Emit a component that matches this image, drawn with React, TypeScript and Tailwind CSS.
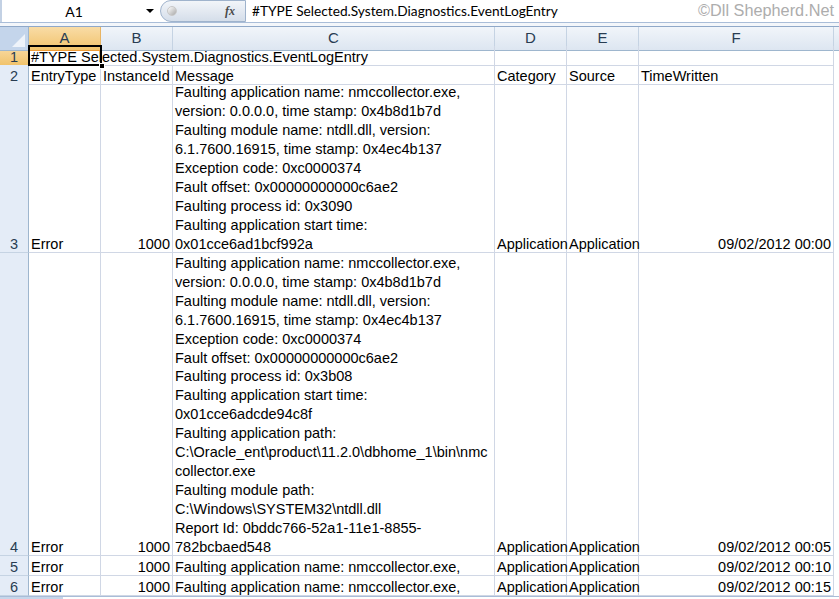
import type { ReactNode } from "react";

/* =========================
LAYOUT
========================= */

const GRID = "grid grid-cols-[29px_72px_72px_322px_72px_72px_195px_5px]";
const CELL_FONT = "font-['Liberation_Sans',Arial,sans-serif] text-[14.5px] leading-[18.9px] text-black";

const row3Msg = [
  "Faulting application name: nmccollector.exe,",
  "version: 0.0.0.0, time stamp: 0x4b8d1b7d",
  "Faulting module name: ntdll.dll, version:",
  "6.1.7600.16915, time stamp: 0x4ec4b137",
  "Exception code: 0xc0000374",
  "Fault offset: 0x00000000000c6ae2",
  "Faulting process id: 0x3090",
  "Faulting application start time:",
  "0x01cce6ad1bcf992a",
];

const row4Msg = [
  "Faulting application name: nmccollector.exe,",
  "version: 0.0.0.0, time stamp: 0x4b8d1b7d",
  "Faulting module name: ntdll.dll, version:",
  "6.1.7600.16915, time stamp: 0x4ec4b137",
  "Exception code: 0xc0000374",
  "Fault offset: 0x00000000000c6ae2",
  "Faulting process id: 0x3b08",
  "Faulting application start time:",
  "0x01cce6adcde94c8f",
  "Faulting application path:",
  "C:\\Oracle_ent\\product\\11.2.0\\dbhome_1\\bin\\nmc",
  "collector.exe",
  "Faulting module path:",
  "C:\\Windows\\SYSTEM32\\ntdll.dll",
  "Report Id: 0bddc766-52a1-11e1-8855-",
  "782bcbaed548",
];

/* =========================
CELLS
========================= */

function Cell({
  children,
  right,
  noRight,
  spill,
}: {
  children?: ReactNode;
  right?: boolean;
  noRight?: boolean;
  spill?: boolean;
}) {
  return (
    <div
      className={`flex flex-col justify-end border-b border-[#d0d7e5] whitespace-nowrap ${
        noRight ? "" : "border-r"
      } ${right ? "items-end pr-[2px]" : "items-start pl-[2px]"} ${
        spill ? "overflow-visible" : "overflow-hidden"
      }`}
    >
      <div className={`relative top-[1.5px] flex flex-col ${right ? "items-end" : "items-start"}`}>
        {children}
      </div>
    </div>
  );
}

function RowHead({ n, active }: { n: number; active?: boolean }) {
  return (
    <div
      className={`flex items-end justify-center border-r border-b font-['Liberation_Sans',Arial,sans-serif] text-[14.5px] leading-[18.9px] text-[#283c52] ${
        active
          ? "bg-gradient-to-b from-[#f9dca6] to-[#f1c36b] border-r-[#f29d36] border-b-[#e8b463]"
          : "bg-[#e4ecf7] border-r-[#9eb6ce] border-b-[#c5d3e3]"
      }`}
    >
      <span className="relative top-[1.5px]">{n}</span>
    </div>
  );
}

function ColHead({ label, active }: { label?: string; active?: boolean }) {
  return (
    <div
      className={`flex items-center justify-center border-r border-b text-[15px] font-['Liberation_Sans',Arial,sans-serif] text-[#283c52] ${
        active
          ? "bg-gradient-to-b from-[#f9dca6] to-[#f1c36b] border-r-[#e8b463] border-b-[#f29d36]"
          : "bg-gradient-to-b from-[#f1f5fa] to-[#dde6f1] border-r-[#c5d3e3] border-b-[#9eb6ce]"
      }`}
    >
      {label}
    </div>
  );
}

/* =========================
APP
========================= */

export default function App() {
  return (
    <div className="w-[839px] h-[599px] overflow-hidden bg-white flex flex-col">
      {/* FORMULA BAR */}
      <div className="relative h-[23px] flex border-b border-[#a9bdd8] bg-white shrink-0">
        <div className="w-[160px] flex items-center border-l-2 border-[#c3d1e4]">
          <span className="flex-1 text-center font-['Lato',sans-serif] text-[14px] text-black">A1</span>
          <span className="w-0 h-0 border-l-[4px] border-r-[4px] border-t-[4px] border-l-transparent border-r-transparent border-t-black mr-[6px]" />
        </div>
        <div className="w-[86px] h-[22px] flex items-center rounded-l-full border border-[#9fb3cc] bg-gradient-to-b from-[#f2f5f9] to-[#d5deea]">
          <span className="ml-[6px] w-[10px] h-[10px] rounded-full bg-gradient-to-br from-[#ffffff] to-[#a9a9a9] border border-[#c8c8c8]" />
          <span className="flex-1" />
          <span className="mr-[10px] font-['Liberation_Serif',serif] italic font-bold text-[12px] text-[#4a4a4a]">
            fx
          </span>
        </div>
        <div className="flex-1 flex items-center pl-[6px] font-['Lato',sans-serif] text-[13.7px] text-black">
          #TYPE Selected.System.Diagnostics.EventLogEntry
        </div>
        <div className="absolute right-[5px] top-0 h-[21px] flex items-center font-['Liberation_Sans',Arial,sans-serif] text-[16.3px] text-[#adadad]">
          ©Dll Shepherd.Net
        </div>
      </div>
      <div className="h-[4px] bg-[#f3f6fa] border-b border-[#8fa8c8] shrink-0" />

      {/* COLUMN HEADERS */}
      <div className={`${GRID} h-[19px] shrink-0`}>
        <div className="relative bg-[#c4d5eb] border-r border-b border-[#9eb6ce]">
          <svg className="absolute right-[3px] bottom-[3px]" width="13" height="13" viewBox="0 0 13 13">
            <polygon points="13,0 13,13 0,13" fill="#eef3fa" />
          </svg>
        </div>
        <ColHead label="A" active />
        <ColHead label="B" />
        <ColHead label="C" />
        <ColHead label="D" />
        <ColHead label="E" />
        <ColHead label="F" />
        <div className="bg-gradient-to-b from-[#f1f5fa] to-[#dde6f1] border-b border-[#9eb6ce]" />
      </div>

      {/* ROW 1 */}
      <div className={`${GRID} h-[19px] shrink-0 ${CELL_FONT}`}>
        <RowHead n={1} active />
        <div className="relative flex items-end border-b border-[#d0d7e5] pl-[2px] whitespace-nowrap z-10">
          <span className="relative top-[1.5px]">#TYPE Selected.System.Diagnostics.EventLogEntry</span>
          <div className="absolute -left-px -top-px -right-px -bottom-px border-2 border-black" />
          <div className="absolute right-[-4px] bottom-[-4px] w-[6px] h-[6px] bg-black border border-white" />
        </div>
        <Cell noRight />
        <Cell />
        <Cell />
        <Cell />
        <Cell />
        <div />
      </div>

      {/* ROW 2 */}
      <div className={`${GRID} h-[19px] shrink-0 ${CELL_FONT}`}>
        <RowHead n={2} />
        <Cell>EntryType</Cell>
        <Cell>InstanceId</Cell>
        <Cell>Message</Cell>
        <Cell>Category</Cell>
        <Cell>Source</Cell>
        <Cell>TimeWritten</Cell>
        <div />
      </div>

      {/* ROW 3 */}
      <div className={`${GRID} h-[169px] shrink-0 ${CELL_FONT}`}>
        <RowHead n={3} />
        <Cell>Error</Cell>
        <Cell right>1000</Cell>
        <Cell>
          {row3Msg.map((l) => (
            <div key={l}>{l}</div>
          ))}
        </Cell>
        <Cell spill>Application</Cell>
        <Cell spill>Application</Cell>
        <Cell right>09/02/2012 00:00</Cell>
        <div />
      </div>

      {/* ROW 4 */}
      <div className={`${GRID} h-[303px] shrink-0 ${CELL_FONT}`}>
        <RowHead n={4} />
        <Cell>Error</Cell>
        <Cell right>1000</Cell>
        <Cell>
          {row4Msg.map((l) => (
            <div key={l}>{l}</div>
          ))}
        </Cell>
        <Cell spill>Application</Cell>
        <Cell spill>Application</Cell>
        <Cell right>09/02/2012 00:05</Cell>
        <div />
      </div>

      {/* ROW 5 */}
      <div className={`${GRID} h-[20px] shrink-0 ${CELL_FONT}`}>
        <RowHead n={5} />
        <Cell>Error</Cell>
        <Cell right>1000</Cell>
        <Cell>Faulting application name: nmccollector.exe,</Cell>
        <Cell spill>Application</Cell>
        <Cell spill>Application</Cell>
        <Cell right>09/02/2012 00:10</Cell>
        <div />
      </div>

      {/* ROW 6 */}
      <div className={`${GRID} h-[20px] shrink-0 ${CELL_FONT}`}>
        <RowHead n={6} />
        <Cell>Error</Cell>
        <Cell right>1000</Cell>
        <Cell>Faulting application name: nmccollector.exe,</Cell>
        <Cell spill>Application</Cell>
        <Cell spill>Application</Cell>
        <Cell right>09/02/2012 00:15</Cell>
        <div />
      </div>

      {/* BOTTOM STRIP */}
      <div className="flex-1 flex border-t border-[#a9bdd8]">
        <div className="w-[63px] bg-[#c6d6ea]" />
      </div>
    </div>
  );
}
